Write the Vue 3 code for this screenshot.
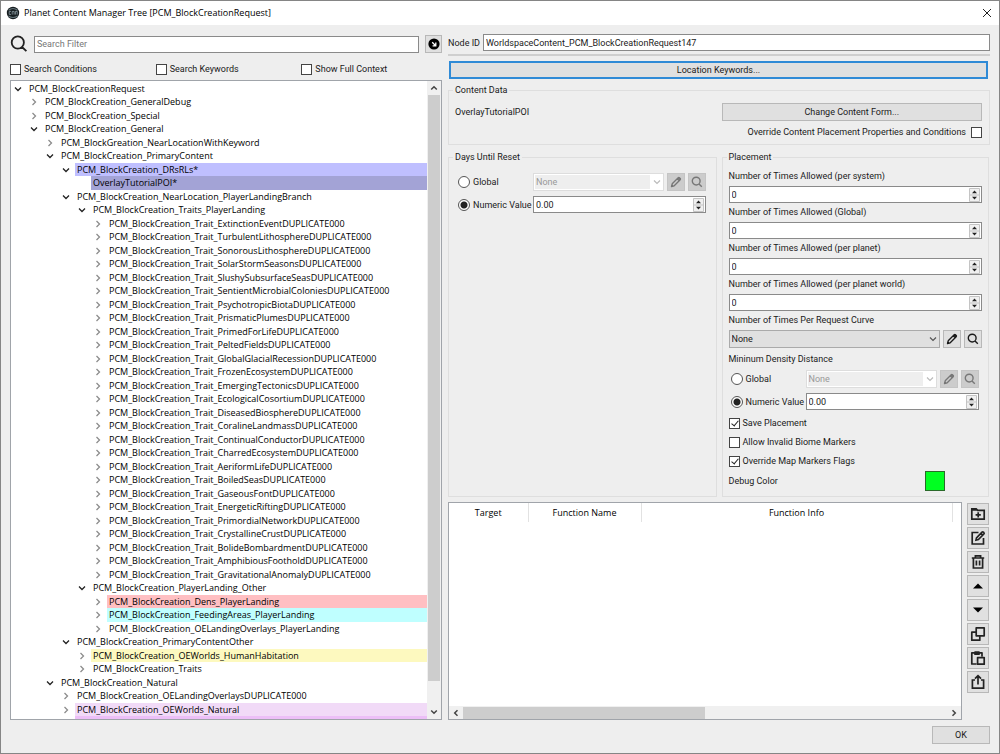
<script setup>
import { ref } from 'vue'

const T = 'PCM_BlockCreation_Trait_'
const traits = [
  'ExtinctionEvent', 'TurbulentLithosphere', 'SonorousLithosphere', 'SolarStormSeasons',
  'SlushySubsurfaceSeas', 'SentientMicrobialColonies', 'PsychotropicBiota', 'PrismaticPlumes',
  'PrimedForLife', 'PeltedFields', 'GlobalGlacialRecession', 'FrozenEcosystem',
  'EmergingTectonics', 'EcologicalCosortium', 'DiseasedBiosphere', 'CoralineLandmass',
  'ContinualConductor', 'CharredEcosystem', 'AeriformLife', 'BoiledSeas', 'GaseousFont',
  'EnergeticRifting', 'PrimordialNetwork', 'CrystallineCrust', 'BolideBombardment',
  'AmphibiousFoothold', 'GravitationalAnomaly'
].map(name => ({ d: 5, t: `${T}${name}DUPLICATE000` }))

const rows = [
  { d: 0, t: 'PCM_BlockCreationRequest', open: true },
  { d: 1, t: 'PCM_BlockCreation_GeneralDebug' },
  { d: 1, t: 'PCM_BlockCreation_Special' },
  { d: 1, t: 'PCM_BlockCreation_General', open: true },
  { d: 2, t: 'PCM_BlockGreation_NearLocationWithKeyword' },
  { d: 2, t: 'PCM_BlockCreation_PrimaryContent', open: true },
  { d: 3, t: 'PCM_BlockCreation_DRsRLs*', open: true, c: 'violet' },
  { d: 4, t: 'OverlayTutorialPOI*', leaf: true, c: 'selected' },
  { d: 3, t: 'PCM_BlockCreation_NearLocation_PlayerLandingBranch', open: true },
  { d: 4, t: 'PCM_BlockCreation_Traits_PlayerLanding', open: true },
  ...traits,
  { d: 4, t: 'PCM_BlockCreation_PlayerLanding_Other', open: true },
  { d: 5, t: 'PCM_BlockCreation_Dens_PlayerLanding', c: 'red' },
  { d: 5, t: 'PCM_BlockCreation_FeedingAreas_PlayerLanding', c: 'cyan' },
  { d: 5, t: 'PCM_BlockCreation_OELandingOverlays_PlayerLanding' },
  { d: 3, t: 'PCM_BlockCreation_PrimaryContentOther', open: true },
  { d: 4, t: 'PCM_BlockCreation_OEWorlds_HumanHabitation', c: 'yellow' },
  { d: 4, t: 'PCM_BlockCreation_Traits' },
  { d: 2, t: 'PCM_BlockCreation_Natural', open: true },
  { d: 3, t: 'PCM_BlockCreation_OELandingOverlaysDUPLICATE000' },
  { d: 3, t: 'PCM_BlockCreation_OEWorlds_Natural', c: 'pink' },
  { d: 3, t: 'PCM_BlockCreation_OEWorlds_Cave', c: 'orchid' }
]

const searchOptions = ['Search Conditions', 'Search Keywords', 'Show Full Context']
const limits = ref([
  { id: 'system', label: 'Number of Times Allowed (per system)', value: '0' },
  { id: 'global', label: 'Number of Times Allowed (Global)', value: '0' },
  { id: 'planet', label: 'Number of Times Allowed (per planet)', value: '0' },
  { id: 'world', label: 'Number of Times Allowed (per planet world)', value: '0' }
])
const flags = ref([
  { label: 'Save Placement', on: true },
  { label: 'Allow Invalid Biome Markers', on: false },
  { label: 'Override Map Markers Flags', on: true }
])
const tools = ['Add', 'Edit', 'Delete', 'Move up', 'Move down', 'Copy', 'Paste', 'Export']
const nodeId = ref('WorldspaceContent_PCM_BlockCreationRequest147')
const resetMode = ref('value')
const resetValue = ref('0.00')
const densityMode = ref('value')
const densityValue = ref('0.00')
</script>

<template>
  <div class="window">
    <svg class="defs" aria-hidden="true">
      <symbol id="pencil" viewBox="0 0 12 12">
        <path d="M1.5 10.5 2.2 7.8 8.2 1.8Q8.8 1.2 9.5 1.8L10.2 2.5Q10.8 3.2 10.2 3.8L4.2 9.8ZM7.2 2.8 9.2 4.8" fill="none" stroke="currentColor" stroke-width="1.3" stroke-linejoin="round" />
        <path d="M1.2 10.8 2 8.2 3.8 10ZM7.4 2.6 9 1.2 10.8 3 9.4 4.6Z" fill="currentColor" />
      </symbol>
      <symbol id="lens" viewBox="0 0 12 12">
        <path d="M5.2 1.2a3.9 3.9 0 1 0 0 7.8 3.9 3.9 0 0 0 0-7.8ZM8 8l2.8 2.8" fill="none" stroke="currentColor" stroke-width="1.4" />
      </symbol>
      <symbol id="chevron" viewBox="0 0 8 8">
        <path d="M1 2.5 4 5.5 7 2.5" fill="none" stroke="currentColor" stroke-width="1.2" />
      </symbol>
      <symbol id="spin" viewBox="0 0 11 14">
        <path d="M.5.5h10v13H.5ZM.5 7h10" fill="#f0f0f0" stroke="#c4c4c4" />
        <path d="M3 5.2 5.5 2.4 8 5.2ZM3 8.8 5.5 11.6 8 8.8Z" fill="#222" />
      </symbol>
    </svg>

    <header class="titlebar">
      <svg class="logo" viewBox="0 0 14 14" aria-hidden="true">
        <circle cx="7" cy="7" r="6.2" fill="#151c1f" />
        <path d="M2.6 4.2Q7 .8 11.4 4.2M2.4 10Q7 13 11.6 10" fill="none" stroke="#65747a" stroke-width="1.1" />
        <path d="M5 5.4H3.2v3H5M6.2 8.6V5.4h1.9v3.2M9.4 8.6V5.4h1.8v3.2" fill="none" stroke="#8fa0a6" stroke-width=".8" />
      </svg>
      <h1>Planet Content Manager Tree [PCM_BlockCreationRequest]</h1>
      <button class="close" aria-label="Close">
        <svg viewBox="0 0 10 10"><path d="m1 1 8 8M9 1 1 9" stroke="#222" fill="none" /></svg>
      </button>
    </header>

    <main class="panes">
      <section class="left">
        <div class="search">
          <svg viewBox="0 0 18 18" aria-hidden="true"><path d="M7.8 1.4a6.1 6.1 0 1 0 0 12.2 6.1 6.1 0 0 0 0-12.2ZM12 12l4.4 4.2" fill="none" stroke="#222" stroke-width="1.8" /></svg>
          <input class="field" type="text" placeholder="Search Filter" aria-label="Search Filter" />
          <button class="btn icon" aria-label="Clear search">
            <svg viewBox="0 0 12 12"><circle cx="6" cy="6" r="5.6" fill="#000" /><path d="M4.2 4.2 7.2 7.2M7.8 4.6v3.2H4.6" fill="none" stroke="#fff" stroke-width="1.3" /></svg>
          </button>
        </div>
        <div class="options">
          <label v-for="o in searchOptions" :key="o" class="check"><input type="checkbox" />{{ o }}</label>
        </div>
        <div class="tree-box">
          <ul class="tree seg" role="tree">
            <li v-for="r in rows" :key="r.t" role="treeitem" :aria-level="r.d + 1" :style="{ paddingLeft: r.d * 16 + 'px' }">
              <svg v-if="!r.leaf" class="arrow" :class="{ open: r.open }" viewBox="0 0 8 8"><path :d="r.open ? 'M1 2.5 4 5.5 7 2.5' : 'M2.5 1 5.5 4 2.5 7'" fill="none" stroke="currentColor" stroke-width="1.3" /></svg>
              <span v-else class="arrow"></span>
              <span class="name" :class="r.c">{{ r.t }}</span>
            </li>
          </ul>
          <div class="vbar">
            <svg viewBox="0 0 8 8"><path d="M1.2 5.5 4 2.7 6.8 5.5" /></svg>
            <div class="vtrack"><div class="vthumb"></div></div>
            <svg viewBox="0 0 8 8"><path d="M1.2 2.5 4 5.3 6.8 2.5" /></svg>
          </div>
        </div>
      </section>

      <section class="right">
        <div class="node">
          <label for="node-id">Node ID</label>
          <input id="node-id" v-model="nodeId" class="field" type="text" />
        </div>
        <hr />
        <button class="btn primary">Location Keywords...</button>

        <fieldset class="group content">
          <legend>Content Data</legend>
          <div class="content-row">
            <span>OverlayTutorialPOI</span>
            <button class="btn">Change Content Form...</button>
          </div>
          <label class="check after">Override Content Placement Properties and Conditions<input type="checkbox" /></label>
        </fieldset>

        <div class="groups">
          <fieldset class="group reset">
            <legend>Days Until Reset</legend>
            <div class="choice">
              <label class="radio"><input v-model="resetMode" type="radio" name="reset" value="global" />Global</label>
              <div class="pick off">
                <div class="select"><select disabled aria-label="Reset global"><option>None</option></select><svg><use href="#chevron" /></svg></div>
                <button class="btn icon" disabled aria-label="Edit reset global"><svg><use href="#pencil" /></svg></button>
                <button class="btn icon" disabled aria-label="Find reset global"><svg><use href="#lens" /></svg></button>
              </div>
              <label class="radio"><input v-model="resetMode" type="radio" name="reset" value="value" />Numeric Value</label>
              <div class="field number"><input v-model="resetValue" type="text" aria-label="Reset value" /><svg><use href="#spin" /></svg></div>
            </div>
          </fieldset>

          <fieldset class="group placement">
            <legend>Placement</legend>
            <template v-for="l in limits" :key="l.id">
              <label class="caption" :for="l.id">{{ l.label }}</label>
              <div class="field number"><input :id="l.id" v-model="l.value" type="text" /><svg><use href="#spin" /></svg></div>
            </template>
            <label class="caption" for="curve">Number of Times Per Request Curve</label>
            <div class="pick">
              <div class="select"><select id="curve"><option>None</option></select><svg><use href="#chevron" /></svg></div>
              <button class="btn icon" aria-label="Edit curve"><svg><use href="#pencil" /></svg></button>
              <button class="btn icon" aria-label="Find curve"><svg><use href="#lens" /></svg></button>
            </div>
            <div class="caption density">Mininum Density Distance</div>
            <div class="choice">
              <label class="radio"><input v-model="densityMode" type="radio" name="density" value="global" />Global</label>
              <div class="pick off">
                <div class="select"><select disabled aria-label="Density global"><option>None</option></select><svg><use href="#chevron" /></svg></div>
                <button class="btn icon" disabled aria-label="Edit density global"><svg><use href="#pencil" /></svg></button>
                <button class="btn icon" disabled aria-label="Find density global"><svg><use href="#lens" /></svg></button>
              </div>
              <label class="radio"><input v-model="densityMode" type="radio" name="density" value="value" />Numeric Value</label>
              <div class="field number"><input v-model="densityValue" type="text" aria-label="Density value" /><svg><use href="#spin" /></svg></div>
            </div>
            <div class="flags">
              <label v-for="f in flags" :key="f.label" class="check"><input v-model="f.on" type="checkbox" />{{ f.label }}</label>
            </div>
            <div class="color-row"><span>Debug Color</span><button class="swatch" aria-label="Debug Color"></button></div>
          </fieldset>
        </div>

        <div class="functions">
          <div class="table-box">
            <table class="seg">
              <colgroup><col class="c1" /><col class="c2" /><col /><col class="c4" /></colgroup>
              <thead><tr><th>Target</th><th>Function Name</th><th>Function Info</th><td></td></tr></thead>
            </table>
            <div class="hbar">
              <svg viewBox="0 0 8 8"><path d="M5.5 1.2 2.7 4 5.5 6.8" /></svg>
              <div class="htrack"><div class="hthumb"></div></div>
              <svg viewBox="0 0 8 8"><path d="M2.5 1.2 5.3 4 2.5 6.8" /></svg>
            </div>
          </div>
          <div class="tools">
            <button v-for="(t, i) in tools" :key="t" class="btn tool" :aria-label="t">
              <svg viewBox="0 0 16 16" fill="none" stroke="#222" stroke-width="1.7">
                <path v-if="i === 0" d="M1.8 3V13.2H14.2V4.4H7.6L6.2 2.8H1.8ZM1.8 3.8H7M8.2 6.2v5.2M5.6 8.8h5.2" />
                <path v-else-if="i === 1" d="M8.5 2.5H2.2V14H13.5V8M6 10.2 6.5 7.8 12 2.2Q12.7 1.6 13.4 2.2L13.9 2.7Q14.5 3.4 13.9 4L8.4 9.6ZM11 3.4l1.8 1.8" />
                <path v-else-if="i === 2" d="M1.8 4h12.4M5.4 3.6V1.8h5.2v1.8M3.4 4V14h9.2V4M6.4 6.6v4.8M9.6 6.6v4.8" />
                <path v-else-if="i === 3" d="M3 10.5 8 5.5 13 10.5Z" fill="#000" stroke="none" />
                <path v-else-if="i === 4" d="M3 5.5 8 10.5 13 5.5Z" fill="#000" stroke="none" />
                <path v-else-if="i === 5" d="M6.2 1.8h8v8h-8ZM6.2 6.2H1.8v8h8V9.8" stroke-linejoin="round" />
                <path v-else-if="i === 6" d="M6.5 14H1.8V2.8H12V6.5M5 2.2h4v2H5ZM7.6 7.6h6.6v6.6H7.6Z" stroke-linejoin="round" />
                <path v-else d="M5 6H2.4v8.2h11.2V6H11M8 10.6V1.8M5 4.6 8 1.6 11 4.6" />
              </svg>
            </button>
          </div>
        </div>
      </section>
    </main>

    <footer><button class="btn ok">OK</button></footer>
  </div>
</template>

<style>
html, body { margin: 0; }
</style>

<style scoped>
* { box-sizing: border-box; }
.window {
  display: flex;
  flex-direction: column;
  height: 100vh;
  min-width: 800px;
  overflow: hidden;
  border: 1px solid #858585;
  background: #eee;
  color: #1a1a1a;
  font: 9px/12px Roboto, "Liberation Sans", sans-serif;
}
.defs { position: absolute; width: 0; height: 0; }
button, input, select { font: inherit; color: inherit; margin: 0; }
.seg { font-family: "Open Sans", "Noto Sans", sans-serif; }

.titlebar { flex: none; display: flex; align-items: center; gap: 4px; height: 24px; padding: 0 7px 0 5px; background: #fff; }
.logo { width: 14px; height: 14px; }
h1 { flex: 1; margin: 0; font: 9px/14px "Open Sans", "Noto Sans", sans-serif; color: #000; }
.close { display: flex; padding: 0; border: 0; background: none; }
.close svg { width: 10px; height: 10px; }

.panes { flex: 1; min-height: 0; display: grid; grid-template-columns: minmax(0, 432fr) minmax(0, 542fr); gap: 6px; padding: 9px 9px 0; }
.left, .right { display: flex; flex-direction: column; min-width: 0; min-height: 0; }

.field { height: 17px; border: 1px solid #8a8a8a; border-radius: 0; background: #fff; padding: 0 2px; outline: none; }
.btn { height: 18px; padding: 0; border: 1px solid #b8b8b8; border-radius: 0; background: #e0e0e0; }
.icon { display: flex; flex: none; align-items: center; justify-content: center; width: 18px; }
.icon svg { width: 12px; height: 12px; }

.search { display: flex; align-items: center; gap: 6px; padding-top: 1px; }
.search > svg { width: 18px; height: 18px; }
.search .field { flex: 1; min-width: 0; }
.search .field::placeholder { color: #777; opacity: 1; }
.search .icon { width: 17px; }
.options { display: grid; grid-template-columns: repeat(3, 1fr); gap: 5px; padding: 10px 0 5px; }

.check, .radio { display: flex; align-items: center; gap: 3px; }
.check input { appearance: none; flex: none; position: relative; width: 11px; height: 11px; border: 1px solid #444; background: #fff; }
.check input:checked::after { content: ""; position: absolute; left: 3px; top: 0; width: 3px; height: 6px; border: solid #222; border-width: 0 1px 1px 0; transform: rotate(40deg); }
.check.after { justify-content: flex-end; gap: 5px; }
.radio { white-space: nowrap; }
.radio input { appearance: none; flex: none; width: 12px; height: 12px; border: 1px solid #555; border-radius: 50%; background: #fff; }
.radio input:checked { background: radial-gradient(circle, #222 0 3px, #fff 4px); }

.tree-box { flex: 1; min-height: 0; display: flex; border: 1px solid #a0a4aa; background: #fff; }
.tree { flex: 1; min-width: 0; margin: 0; padding: 1px 0 0 3px; list-style: none; overflow: hidden; color: #000; }
.tree li { display: flex; align-items: center; height: 13px; line-height: 13px; }
.tree li:nth-child(even) { height: 14px; line-height: 14px; }
.arrow { flex: none; width: 8px; height: 8px; margin: 0 5px 0 0; color: #8c8c8c; }
.arrow.open { color: #222; }
.name { flex: 1; padding-left: 2px; white-space: nowrap; }
.violet { background: #bfbfff; }
.selected { background: #a3a3d6; }
.red { background: #ffbfc2; }
.cyan { background: #bfffff; }
.yellow { background: #fdf9bf; }
.pink { background: #f1daf7; }
.orchid { background: #ecbff7; }
.vbar { flex: none; display: flex; flex-direction: column; align-items: center; width: 14px; background: #f0f0f0; }
.vbar svg, .hbar svg { flex: none; width: 8px; height: 8px; margin: 3px; fill: none; stroke: #444; stroke-width: 1.5; }
.vtrack { flex: 1; width: 100%; }
.vthumb { height: 96%; margin: 0 1px; background: #cdcdcd; }

.node { display: flex; align-items: center; gap: 3px; }
.node .field { flex: 1; min-width: 0; }
hr { width: 100%; margin: 3px 0 5px; border: 0; border-top: 2px solid #cfcfcf; }
.primary { margin: 0 2px 0 1px; border: 2px solid #2f8ad6; }

.group { margin: 0; padding: 0; border: 1px solid #dedede; min-width: 0; }
.group legend { margin-left: -2px; padding: 0 2px; height: 12px; }
.content { margin-top: 5px; padding: 7px 7px 6px 6px; }
.content-row { display: grid; grid-template-columns: 266fr 260fr; align-items: center; margin-bottom: 5px; }
.groups { display: grid; grid-template-columns: 268fr 267fr; gap: 5px; padding-right: 1px; margin-top: 6px; }
.reset { padding: 10px 6px 0; }
.choice { display: grid; grid-template-columns: 72px 1fr; align-items: center; gap: 5px 3px; }
.reset .choice { padding: 0 4px 0 3px; }
.pick { display: flex; gap: 3px; min-width: 0; }
.select { position: relative; flex: 1; min-width: 0; }
.select select { appearance: none; display: block; width: 100%; height: 18px; padding: 0 2px; border: 1px solid #aaa; border-radius: 0; background: #e0e0e0; opacity: 1; }
.select svg { position: absolute; right: 3px; top: 5px; width: 8px; height: 8px; color: #555; pointer-events: none; }
.off { color: #999; }
.off .select select { padding: 0 1px; border: 2px solid #fff; border-right-width: 14px; background: #eee; outline: 1px solid #ddd; outline-offset: -1px; }
.off .select svg { color: #bbb; }
.off .btn { background: #ccc; border-color: #c4c4c4; color: #777; }
.number { display: flex; align-items: center; padding-right: 1px; }
.number input { flex: 1; width: 0; min-width: 0; height: 14px; padding: 0; border: 0; background: none; outline: none; }
.number svg { flex: none; width: 11px; height: 14px; }

.placement { padding: 7px 6px 5px; }
.caption { display: block; height: 12px; margin-bottom: 4px; }
.placement > .number { margin-bottom: 3px; }
.placement > .density { margin: 5px 0; }
.placement .choice { padding: 0 3px 0 2px; }
.flags { display: flex; flex-direction: column; gap: 7px; padding-top: 7px; }
.color-row { display: flex; align-items: center; justify-content: space-between; margin: 4px 37px 0 0; }
.swatch { width: 20px; height: 20px; padding: 0; border: 1px solid #2a6a2a; background: #00ff21; }

.functions { flex: 1; min-height: 0; display: flex; gap: 5px; margin-top: 5px; padding-right: 1px; }
.table-box { flex: 1; min-width: 0; display: flex; flex-direction: column; justify-content: space-between; border: 1px solid #a0a4aa; background: #fff; }
table { width: 100%; table-layout: fixed; border-collapse: collapse; color: #000; }
th { height: 19px; padding: 0; font-weight: 400; border-right: 1px solid #e2e2e2; }
td { padding: 0; }
.c1 { width: 79px; }
.c2 { width: 113px; }
.c4 { width: 9px; }
.hbar { display: flex; align-items: center; height: 13px; background: #f0f0f0; }
.htrack { flex: 1; height: 12px; }
.hthumb { width: 50%; height: 100%; background: #cdcdcd; }
.tools { flex: none; display: flex; flex-direction: column; gap: 2px; padding-top: 1px; }
.tool { display: flex; align-items: center; justify-content: center; width: 22px; height: 22px; }
.tool svg { width: 16px; height: 16px; }

footer { flex: none; display: flex; justify-content: flex-end; padding: 6px 9px 9px; }
.ok { width: 58px; }
</style>
